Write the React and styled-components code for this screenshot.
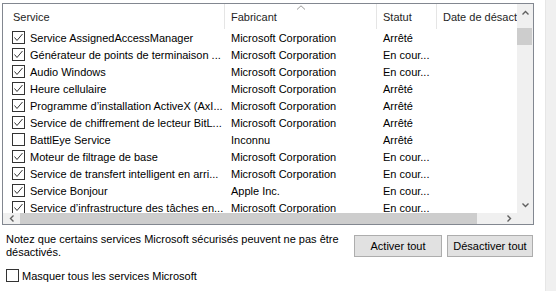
import React from "react";
import styled, { createGlobalStyle } from "styled-components";

const GlobalStyle = createGlobalStyle`
  html, body {
    margin: 0;
    padding: 0;
    background: #fff;
  }
  body {
    font-family: "Liberation Sans", Arial, sans-serif;
    font-size: 11px;
    color: #000;
  }
`;

const Window = styled.div`
  width: 556px;
  height: 291px;
  display: flex;
  overflow: hidden;
  background: #fff;
`;

const Content = styled.div`
  flex: 1;
  padding: 3px 11px 0 2px;
  display: flex;
  flex-direction: column;
`;

const Strip = styled.div`
  width: 10px;
  background: #f0f0f0;
  border-left: 1px solid #e6e6e6;
`;

const ListBox = styled.div`
  height: 222px;
  box-sizing: border-box;
  border: 1px solid #828790;
  display: grid;
  grid-template-columns: 1fr 16px;
  grid-template-rows: 1fr 11px;
  overflow: hidden;
`;

const TableArea = styled.div`
  overflow: hidden;
  display: flex;
  flex-direction: column;
`;

const COLS = "222px 152px 60px 200px";

const HeaderRow = styled.div`
  display: grid;
  grid-template-columns: ${COLS};
  height: 25px;
  flex-shrink: 0;
`;

const HeaderCell = styled.div`
  position: relative;
  display: flex;
  align-items: center;
  padding-left: ${(p) => (p.$first ? 10 : 6)}px;
  border-right: 1px solid #e5e5e5;
  color: #1e1e1e;
  white-space: nowrap;
  overflow: hidden;
`;

const SortCaret = styled.svg`
  position: absolute;
  top: 1px;
  left: 50%;
  transform: translateX(-50%);
`;

const Row = styled.div`
  display: grid;
  grid-template-columns: ${COLS};
  height: 17px;
  flex-shrink: 0;
`;

const Cell = styled.div`
  display: flex;
  align-items: center;
  gap: 5px;
  padding-left: ${(p) => (p.$first ? 9 : 6)}px;
  white-space: nowrap;
  overflow: hidden;
`;

const VScroll = styled.div`
  background: #f0f0f0;
  display: flex;
  flex-direction: column;
`;

const ArrowButton = styled.div`
  height: ${(p) => p.$size || 17}px;
  width: ${(p) => (p.$horizontal ? "17px" : "auto")};
  display: flex;
  align-items: center;
  justify-content: center;
  flex-shrink: 0;
`;

const VThumb = styled.div`
  margin: 7px 1px 0 0;
  height: 17px;
  background: #cdcdcd;
`;

const Spacer = styled.div`
  flex: 1;
`;

const HScroll = styled.div`
  background: #f0f0f0;
  display: flex;
  align-items: stretch;
`;

const HThumb = styled.div`
  width: 457px;
  background: #cdcdcd;
`;

const Corner = styled.div`
  background: #f0f0f0;
`;

const Footer = styled.div`
  display: flex;
  justify-content: space-between;
  align-items: flex-start;
  margin-top: 8px;
  padding-left: 4px;
`;

const Note = styled.p`
  margin: 0;
  line-height: 13px;
`;

const Buttons = styled.div`
  display: flex;
  gap: 5px;
  margin-top: 2px;
  margin-right: 1px;
`;

const Button = styled.button`
  width: ${(p) => p.$w}px;
  height: 22px;
  padding: 0;
  background: #e1e1e1;
  border: 1px solid #adadad;
  font-family: inherit;
  font-size: 11px;
  color: #000;
`;

const CheckRow = styled.label`
  display: flex;
  align-items: center;
  gap: 3px;
  margin-top: 10px;
  padding-left: 4px;
`;

function CheckBox({ checked }) {
  return (
    <svg width="13" height="13" viewBox="0 0 13 13" style={{ flexShrink: 0 }}>
      <rect x="0.5" y="0.5" width="12" height="12" fill="#fff" stroke="#333" />
      {checked && (
        <polyline
          points="2.5,6.5 5,9.5 10.5,3"
          fill="none"
          stroke="#333"
          strokeWidth="1"
        />
      )}
    </svg>
  );
}

function Chevron({ dir, color = "#606060" }) {
  const pts = {
    up: "0.5,4.5 3.5,1.5 6.5,4.5",
    down: "0.5,1.5 3.5,4.5 6.5,1.5",
    left: "4.5,0.5 1.5,3.5 4.5,6.5",
    right: "1.5,0.5 4.5,3.5 1.5,6.5",
  }[dir];
  const horiz = dir === "left" || dir === "right";
  return (
    <svg width={horiz ? 6 : 7} height={horiz ? 7 : 6} viewBox={horiz ? "0 0 6 7" : "0 0 7 6"}>
      <polyline points={pts} fill="none" stroke={color} strokeWidth="1.4" />
    </svg>
  );
}

const services = [
  ["Service AssignedAccessManager", "Microsoft Corporation", "Arrêté", true],
  ["Générateur de points de terminaison ...", "Microsoft Corporation", "En cour...", true],
  ["Audio Windows", "Microsoft Corporation", "En cour...", true],
  ["Heure cellulaire", "Microsoft Corporation", "Arrêté", true],
  ["Programme d’installation ActiveX (AxI...", "Microsoft Corporation", "Arrêté", true],
  ["Service de chiffrement de lecteur BitL...", "Microsoft Corporation", "Arrêté", true],
  ["BattlEye Service", "Inconnu", "Arrêté", false],
  ["Moteur de filtrage de base", "Microsoft Corporation", "En cour...", true],
  ["Service de transfert intelligent en arri...", "Microsoft Corporation", "En cour...", true],
  ["Service Bonjour", "Apple Inc.", "En cour...", true],
  ["Service d’infrastructure des tâches en...", "Microsoft Corporation", "En cour...", true],
];

export default function App() {
  return (
    <Window>
      <GlobalStyle />
      <Content>
        <ListBox>
          <TableArea>
            <HeaderRow>
              <HeaderCell $first>Service</HeaderCell>
              <HeaderCell>
                <SortCaret width="9" height="5" viewBox="0 0 9 5">
                  <polyline points="0.5,4.5 4.5,0.8 8.5,4.5" fill="none" stroke="#9a9a9a" strokeWidth="1" />
                </SortCaret>
                Fabricant
              </HeaderCell>
              <HeaderCell>Statut</HeaderCell>
              <HeaderCell>Date de désact</HeaderCell>
            </HeaderRow>
            {services.map(([name, maker, status, checked]) => (
              <Row key={name}>
                <Cell $first>
                  <CheckBox checked={checked} />
                  {name}
                </Cell>
                <Cell>{maker}</Cell>
                <Cell>{status}</Cell>
                <Cell />
              </Row>
            ))}
          </TableArea>
          <VScroll>
            <ArrowButton>
              <Chevron dir="up" />
            </ArrowButton>
            <VThumb />
            <Spacer />
            <ArrowButton>
              <Chevron dir="down" />
            </ArrowButton>
          </VScroll>
          <HScroll>
            <ArrowButton $horizontal $size={11}>
              <Chevron dir="left" />
            </ArrowButton>
            <HThumb />
            <Spacer />
            <ArrowButton $horizontal $size={11}>
              <Chevron dir="right" />
            </ArrowButton>
          </HScroll>
          <Corner />
        </ListBox>
        <Footer>
          <Note>
            Notez que certains services Microsoft sécurisés peuvent ne pas être
            <br />
            désactivés.
          </Note>
          <Buttons>
            <Button $w={88}>Activer tout</Button>
            <Button $w={86}>Désactiver tout</Button>
          </Buttons>
        </Footer>
        <CheckRow>
          <CheckBox checked={false} />
          Masquer tous les services Microsoft
        </CheckRow>
      </Content>
      <Strip />
    </Window>
  );
}
